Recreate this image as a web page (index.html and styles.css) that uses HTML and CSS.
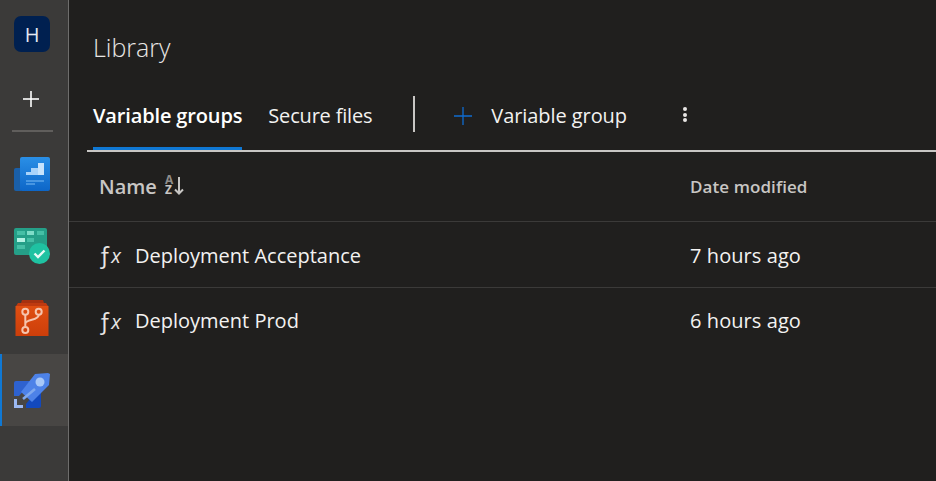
FILE: index.html
```html
<!DOCTYPE html>
<html lang="en">
<head>
<meta charset="utf-8">
<title>Library</title>
<link rel="stylesheet" href="styles.css">
</head>
<body>
<div class="app">
  <nav class="rail">
    <div class="org"><div class="avatar">H</div></div>
    <div class="add">
      <svg width="18" height="18" viewBox="0 0 18 18"><path d="M9 1v16" stroke="#fff" stroke-width="1.6"/><path d="M1 9h16" stroke="#fff" stroke-width="1.6"/></svg>
    </div>
    <div class="rail-sep"></div>
    <div class="svc">
      <svg width="36" height="36" viewBox="0 0 36 36"><defs><linearGradient id="pl" x1="0" y1="0" x2="0" y2="1"><stop offset="0" stop-color="#2a8fe6"/><stop offset="1" stop-color="#0d66c8"/></linearGradient></defs><path d="M0 14a2 2 0 0 1 2-2h5v23H2a2 2 0 0 1-2-2z" fill="#1a5fa8"/><rect x="6" y="1" width="30" height="34" rx="2" fill="url(#pl)"/><path d="M12 19v-3h5v-4h7V7h6v12z" fill="#a9d3fa"/><path d="M24 7h6v12h-6z" fill="#c7e3fc"/><path d="M12 25h18M12 28h9" stroke="#7dbdf5" stroke-width="1"/></svg>
    </div>
    <div class="svc">
      <svg width="36" height="36" viewBox="0 0 36 36"><rect x="0" y="0" width="33" height="27" rx="2" fill="#259f88"/><g fill="#46bfa6"><rect x="3" y="3" width="8" height="4"/><rect x="13" y="3" width="7" height="4" fill="#7fdcc8"/><rect x="23" y="3" width="7" height="4"/><rect x="13" y="10" width="7" height="4"/><rect x="3" y="17" width="8" height="4"/></g><rect x="3" y="10" width="8" height="4" fill="#b5f2e4"/><circle cx="25.500" cy="25.500" r="10.500" fill="#1fc2a2"/><path d="M20.500 25.500l3.500 3.500 6.500-6.500" fill="none" stroke="#e8fbf6" stroke-width="2.400"/></svg>
    </div>
    <div class="svc">
      <svg width="36" height="36" viewBox="0 0 36 36"><defs><linearGradient id="rp" x1="0" y1="0" x2="0" y2="1"><stop offset="0" stop-color="#e04f12"/><stop offset="1" stop-color="#cc3e0a"/></linearGradient></defs><path d="M8 0h21l1 3H7z" fill="#a63110"/><path d="M4 3h28l2 3H2z" fill="#bf3a10"/><path d="M1.500 6h33v30h-33z" fill="url(#rp)"/><g fill="none" stroke="#f6c4ad" stroke-width="2"><circle cx="11.300" cy="11.700" r="3"/><circle cx="24.700" cy="11.700" r="3"/><circle cx="11.300" cy="30" r="3"/><path d="M11.300 15v11.500M24.700 15c0 6-13.400 3.500-13.400 9"/></g></svg>
    </div>
    <div class="svc active">
      <svg width="36" height="36" viewBox="0 0 36 36"><path d="M0 11a2 2 0 0 1 2-2h16L5 24H0z" fill="#2e62d0"/><path d="M27 13v21a2 2 0 0 1-2 2H12v-4z" fill="#1349bd"/><path d="M21 2l13-1 2 1-1 11-17 17-11-10z" fill="#4d82e8"/><circle cx="26" cy="10" r="4.500" fill="#a8c8f8"/><path d="M9 27l12-10" stroke="#7fa9ee" stroke-width="2.600"/><path d="M0 27h3v6h6v3H0z" fill="#9cb9f2"/></svg>
    </div>
  </nav>
  <main class="main">
    <h1 class="title">Library</h1>
    <div class="tabs">
      <a class="tab current">Variable groups</a>
      <a class="tab secure">Secure files</a>
      <span class="tab-sep"></span>
      <a class="action">
        <svg width="18" height="18" viewBox="0 0 18 18"><path d="M9 0v18M0 9h18" stroke="#0f6cd0" stroke-width="1.300"/></svg>
        <span>Variable group</span>
      </a>
      <span class="more"><i></i><i></i><i></i></span>
    </div>
    <div class="table">
      <div class="row head">
        <div class="col-name head-name"><span>Name</span>
          <svg class="sort" width="20" height="20" viewBox="0 0 20 20"><path d="M15 1v16M11 13.500l4 4 4-4" fill="none" stroke="#c8c6c4" stroke-width="2"/></svg>
          <span class="az"><b>A</b><b class="az-z">Z</b></span>
        </div>
        <div class="col-date head-date">Date modified</div>
      </div>
      <div class="row item first">
        <div class="col-name"><span class="fx"><span class="fx-f">ƒ</span><span class="fx-x">x</span></span>Deployment Acceptance</div>
        <div class="col-date">7 hours ago</div>
      </div>
      <div class="row item">
        <div class="col-name"><span class="fx"><span class="fx-f">ƒ</span><span class="fx-x">x</span></span>Deployment Prod</div>
        <div class="col-date">6 hours ago</div>
      </div>
    </div>
  </main>
</div>
</body>
</html>
```

FILE: styles.css
```css
* { box-sizing: border-box; }
html, body { margin: 0; height: 100%; overflow: hidden; }
body { background: #201f1e; color: #f3f2f1; font-family: "Open Sans", "Noto Sans", "Liberation Sans", sans-serif; }
.app { display: flex; height: 481px; }
.rail { width: 69px; flex: none; background: #3b3a39; border-right: 1px solid #6e6d6c; display: flex; flex-direction: column; }
.org { height: 68px; padding: 16px 0 0 14px; }
.avatar { width: 36px; height: 36px; border-radius: 7px; background: #002050; color: #e4e8f0; display: flex; align-items: center; justify-content: center; font-size: 20px; }
.add { height: 62px; display: flex; align-items: center; justify-content: center; padding: 0 6px 0 0; }
.rail-sep { height: 2px; margin: 0 15px 0 12px; background: #605e5c; }
.svc { height: 72px; padding-left: 14px; display: flex; align-items: center; }
.rail-sep + .svc { margin-top: 6px; }
.svc.active { background: #484644; border-left: 2px solid #0f78d4; padding-left: 12px; }
.main { flex: 1; min-width: 0; }
.title { margin: 0; padding: 28px 0 0 24px; height: 81px; font-size: 25px; line-height: 39px; font-weight: 300; color: #e8e6e4; }
.tabs { margin-left: 18px; height: 71px; border-bottom: 2px solid #c8c6c4; display: flex; align-items: flex-start; padding-left: 6px; }
.tab { font-size: 20px; line-height: 30px; height: 69px; padding-top: 20px; color: #f3f2f1; }
.tab.current { font-weight: 600; color: #fff; border-bottom: 3px solid #0f78d4; margin-right: 26px; letter-spacing: -0.14px; }
.tab.secure { letter-spacing: -0.19px; }
.tab-sep { width: 2px; height: 36px; margin: 15px 0 0 41px; background: #c8c6c4; }
.action { display: flex; align-items: center; gap: 19px; margin: 20px 0 0 39px; font-size: 20px; line-height: 30px; letter-spacing: -0.07px; }
.more { display: flex; flex-direction: column; gap: 1.5px; margin: 26px 0 0 56px; }
.more i { display: block; width: 4px; height: 4px; border-radius: 50%; background: #e8e6e4; }
.row { display: flex; align-items: center; }
.head { height: 69px; }
.item { height: 66px; border-top: 1px solid #3b3a39; }
.item.first { padding-top: 1px; }
.col-name { width: 621px; padding-left: 30px; flex: none; font-size: 20px; display: flex; align-items: center; }
.col-date { font-size: 20px; letter-spacing: 0.08px; }
.head-name { font-weight: 600; color: #c8c6c4; position: relative; }
.sort { position: absolute; left: 95px; top: 3px; }
.az { position: absolute; left: 96px; top: 2px; display: flex; flex-direction: column; font-size: 12px; line-height: 10px; color: #8f8d8b; }
.az b { font-weight: 700; }
.az-z { color: #c8c6c4; }
.head-date { font-size: 17px; font-weight: 600; color: #c8c6c4; }
.fx { width: 36px; padding-left: 0; color: #e8e6e4; display: flex; align-items: baseline; margin-left: -1px; margin-right: 1px; }
.fx-f { font-size: 23px; font-weight: 400; line-height: 24px; }
.fx-x { font-size: 20px; font-style: italic; font-weight: 400; line-height: 24px; margin-left: 0; }
```
